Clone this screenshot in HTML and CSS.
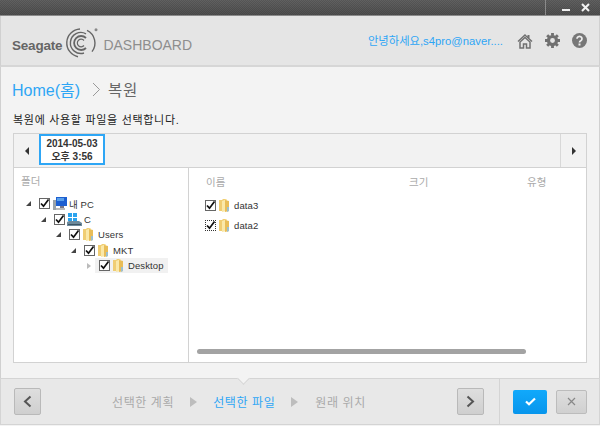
FILE: index.html
```html
<!DOCTYPE html>
<html>
<head>
    <title>Seagate Dashboard</title>
    <link rel="stylesheet" href="styles.css">
</head>
<body>
    <svg class="defs" width="0" height="0">
        <symbol id="folder" viewBox="0 0 12 15">
            <path d="M1 2h3l1-1h3v12H1z" fill="#f0cd72"/>
            <path d="M4 3l5-2v12l-5 1z" fill="#fae8a8"/>
            <path d="M7 2l4 1v10l-4 1z" fill="#e8bd58"/>
            <path d="M9 9l2 0v4l-2 1z" fill="#9cc0cf"/>
        </symbol>
        <symbol id="tick" viewBox="0 0 9 9">
            <path d="M1 4.500l2.500 2.700L8.500 0.500" fill="none" stroke="#111" stroke-width="1.700"/>
        </symbol>
    </svg>

    <div class="titlebar">
        <div class="win-btns">
            <svg class="win-min" width="8" height="2"><rect width="8" height="2" fill="#eee"/></svg>
            <svg class="win-close" width="9" height="9" viewBox="0 0 9 9"><path d="M1 1l7 7M8 1l-7 7" stroke="#f2f2f2" stroke-width="2"/></svg>
        </div>
    </div>

    <div class="header">
        <div class="brand">
            <span class="seagate">Seagate</span>
            <svg class="logo" width="34" height="30" viewBox="0 0 34 30" fill="none" stroke="#666" stroke-width="1.400">
                <path d="M15 1A14 14 0 0 0 13 28.700"/>
                <path d="M22 2.400A14 14 0 0 1 27 23.600"/>
                <path d="M21 5.800A10.500 10.500 0 1 0 19 25"/>
                <path d="M21 10A7 7 0 1 0 21 20" stroke-width="1.800"/>
                <path d="M19 12.500A3.800 3.800 0 1 0 19 17.500" stroke-width="1.200"/>
                <circle cx="31" cy="1.800" r="1.500" fill="#888" stroke="none"/>
            </svg>
            <span class="dashboard">DASHBOARD</span>
        </div>
        <div class="user">안녕하세요,s4pro@naver....</div>
        <div class="head-icons">
            <svg width="16" height="16" viewBox="0 0 16 16"><path d="M8 1L0.500 8l1 1L8 3l6.500 6 1-1-3-2.800V2h-2v1.400z" fill="#707070"/><path d="M3 9l5-4.500L13 9v6H9.500v-4h-3v4H3z" fill="none" stroke="#707070" stroke-width="1.500"/></svg>
            <svg class="gear" width="15" height="15" viewBox="0 0 16 16"><circle cx="8" cy="8" r="4.300" fill="none" stroke="#707070" stroke-width="3.400"/><path d="M8 0v3M8 13v3M0 8h3M13 8h3M2.300 2.300l2 2M11.700 11.700l2 2M13.700 2.300l-2 2M4.300 11.700l-2 2" stroke="#707070" stroke-width="3"/></svg>
            <svg width="15" height="15" viewBox="0 0 15 15"><circle cx="7.500" cy="7.500" r="7.500" fill="#777"/><path d="M5 5.700a2.500 2.300 0 1 1 3.800 2C7.900 8.200 7.500 8.600 7.500 9.500" fill="none" stroke="#eee" stroke-width="1.700"/><rect x="6.500" y="10.500" width="2" height="2" fill="#eee"/></svg>
        </div>
    </div>

    <div class="content">
        <div class="crumbs">
            <span class="crumb-home">Home(홈)</span>
            <svg class="crumb-sep" width="9" height="15" viewBox="0 0 9 15"><path d="M1 1l6.500 6.500L1 14" fill="none" stroke="#999" stroke-width="1"/></svg>
            <span class="crumb-now">복원</span>
        </div>
        <div class="hint">복원에 사용할 파일을 선택합니다.</div>

        <div class="panel">
            <div class="timeline">
                <div class="tl-arrow"><span class="tri-left"></span></div>
                <div class="tl-date">2014-05-03<br>오후 3:56</div>
                <div class="tl-space"></div>
                <div class="tl-arrow tl-next"><span class="tri-right"></span></div>
            </div>
            <div class="browser">
                <div class="tree">
                    <div class="col-head">폴더</div>
                    <div class="node lvl0">
                        <span class="tri-open"></span>
                        <span class="check"><svg width="9" height="9"><use href="#tick"/></svg></span>
                        <svg class="ico wide" width="15" height="15" viewBox="0 0 15 15"><rect x="4" y="1" width="11" height="9" fill="#1d5fd0"/><rect x="5" y="2" width="7" height="3" fill="#5aa0ea"/><rect x="8" y="10" width="4" height="2" fill="#778"/><rect x="1" y="4" width="3" height="10" fill="#9aa3aa"/><rect x="4" y="12" width="9" height="2" fill="#bbb"/></svg>
                        <span class="name">내 PC</span>
                    </div>
                    <div class="node lvl1">
                        <span class="tri-open"></span>
                        <span class="check"><svg width="9" height="9"><use href="#tick"/></svg></span>
                        <svg class="ico wide" width="15" height="15" viewBox="0 0 15 15"><path d="M1 1h4v4H1zM6 1h4v4H6zM1 6h4v3H1zM6 6h4v3H6z" fill="#2aa3ee"/><path d="M0 10l2-1h10l3 2v3H0z" fill="#6d8a9c"/><rect x="1" y="12" width="13" height="1" fill="#3d5566"/></svg>
                        <span class="name">C</span>
                    </div>
                    <div class="node lvl2">
                        <span class="tri-open"></span>
                        <span class="check"><svg width="9" height="9"><use href="#tick"/></svg></span>
                        <svg class="ico" width="12" height="15"><use href="#folder"/></svg>
                        <span class="name">Users</span>
                    </div>
                    <div class="node lvl3">
                        <span class="tri-open"></span>
                        <span class="check"><svg width="9" height="9"><use href="#tick"/></svg></span>
                        <svg class="ico" width="12" height="15"><use href="#folder"/></svg>
                        <span class="name">MKT</span>
                    </div>
                    <div class="node lvl4">
                        <span class="tri-closed"></span>
                        <div class="selected">
                            <span class="check"><svg width="9" height="9"><use href="#tick"/></svg></span>
                            <svg class="ico" width="12" height="15"><use href="#folder"/></svg>
                            <span class="name">Desktop</span>
                        </div>
                    </div>
                </div>
                <div class="files">
                    <div class="file-head">
                        <span class="fh-name">이름</span>
                        <span class="fh-size">크기</span>
                        <span class="fh-type">유형</span>
                    </div>
                    <div class="file">
                        <span class="check"><svg width="9" height="9"><use href="#tick"/></svg></span>
                        <svg class="ico" width="12" height="15"><use href="#folder"/></svg>
                        <span class="name">data3</span>
                    </div>
                    <div class="file">
                        <span class="check dotted"><svg width="9" height="9"><use href="#tick"/></svg></span>
                        <svg class="ico" width="12" height="15"><use href="#folder"/></svg>
                        <span class="name">data2</span>
                    </div>
                    <div class="scroll-wrap"><div class="scrollbar"></div></div>
                </div>
            </div>
        </div>
    </div>

    <div class="footer">
        <span class="notch"></span>
        <div class="wizard">
            <button class="nav-btn"><svg width="9" height="13" viewBox="0 0 9 13"><path d="M7.500 1.500L2 6.500l5.500 5" fill="none" stroke="#555" stroke-width="2"/></svg></button>
            <div class="steps">
                <span class="step">선택한 계획</span>
                <span class="step-tri"></span>
                <span class="step active">선택한 파일</span>
                <span class="step-tri"></span>
                <span class="step">원래 위치</span>
            </div>
            <button class="nav-btn"><svg width="9" height="13" viewBox="0 0 9 13"><path d="M1.500 1.500L7 6.500l-5.500 5" fill="none" stroke="#555" stroke-width="2"/></svg></button>
        </div>
        <div class="actions">
            <button class="ok"><svg width="11" height="9" viewBox="0 0 11 9"><path d="M1 4.500l3 2.800L10 1.500" fill="none" stroke="#fff" stroke-width="2.200"/></svg></button>
            <button class="cancel"><svg width="9" height="9" viewBox="0 0 9 9"><path d="M1 1l7 7M8 1l-7 7" stroke="#888" stroke-width="1.200"/></svg></button>
        </div>
    </div>
</body>
</html>
```

FILE: styles.css
```css
html, body {
    margin: 0;
    padding: 0;
}
body {
    width: 600px;
    height: 426px;
    overflow: hidden;
    display: flex;
    flex-direction: column;
    background: #f3f3f3;
    font-family: "Liberation Sans", "Noto Sans CJK KR", sans-serif;
    font-size: 11px;
    color: #222;
}
.defs {
    position: absolute;
}
.titlebar {
    height: 15px;
    flex: none;
    background:
        repeating-conic-gradient(rgba(0, 0, 0, 0.12) 0 25%, transparent 0 50%) 0 0 / 2px 2px,
        linear-gradient(#626262, #505050);
    border-bottom: 1px solid #8a8a8a;
    display: flex;
    justify-content: flex-end;
}
.win-btns {
    width: 55px;
    border-left: 1px solid #8a8a8a;
    box-sizing: border-box;
    display: flex;
    align-items: center;
    gap: 11px;
    padding-left: 16px;
}
.win-min {
    margin-top: 5px;
}
.header {
    height: 49px;
    flex: none;
    background: #e5e5e5;
    border-bottom: 2px solid #d6d6d6;
    border-left: 1px solid #d0d0d0;
    border-right: 1px solid #d0d0d0;
    display: flex;
    align-items: center;
}
.brand {
    display: flex;
    align-items: center;
    margin-left: 11px;
}
.seagate {
    font-weight: bold;
    font-size: 13.500px;
    color: #666;
    letter-spacing: -0.200px;
    margin-top: 10px;
}
.logo {
    margin-left: 3px;
    margin-top: 4px;
}
.dashboard {
    font-size: 14px;
    color: #8e8e8e;
    margin-left: 4px;
    margin-top: 8px;
}
.user {
    margin-left: auto;
    font-size: 11.300px;
    color: #2ea6f5;
    margin-top: -2px;
}
.head-icons {
    display: flex;
    align-items: center;
    gap: 12px;
    margin-left: 14px;
    margin-right: 12px;
}
.content {
    flex: 1;
    border-left: 1px solid #d0d0d0;
    border-right: 1px solid #d0d0d0;
    padding: 0 12px;
    min-height: 0;
}
.crumbs {
    display: flex;
    align-items: center;
    height: 20px;
    margin: 12px 0 0 -1px;
}
.crumb-home {
    font-size: 16px;
    color: #2ea6f5;
}
.crumb-sep {
    margin: 0 7px 0 12px;
}
.crumb-now {
    font-size: 15.500px;
    letter-spacing: 0.800px;
    color: #666;
}
.hint {
    margin-top: 14px;
    height: 14px;
    line-height: 14px;
    color: #222;
    letter-spacing: 0.700px;
}
.panel {
    margin-top: 6px;
    height: 230px;
    box-sizing: border-box;
    border: 1px solid #d2d2d2;
    background: #fff;
    display: flex;
    flex-direction: column;
}
.timeline {
    height: 33px;
    background: #f2f2f2;
    border-bottom: 1px solid #d2d2d2;
    display: flex;
    flex: none;
}
.tl-arrow {
    width: 25px;
    display: flex;
    align-items: center;
    justify-content: center;
}
.tl-next {
    border-left: 1px solid #d8d8d8;
}
.tri-left {
    border: 4px solid transparent;
    border-right: 4px solid #333;
    border-left: 0;
}
.tri-right {
    border: 4px solid transparent;
    border-left: 4px solid #333;
    border-right: 0;
}
.tl-date {
    width: 66px;
    height: 31px;
    border: 2px solid #2ea6f5;
    box-sizing: border-box;
    background: #fff;
    text-align: center;
    font-size: 10px;
    font-weight: bold;
    line-height: 12.500px;
    padding-top: 2px;
    color: #333;
}
.tl-space {
    flex: 1;
}
.browser {
    flex: 1;
    display: flex;
    min-height: 0;
}
.tree {
    width: 174px;
    border-right: 1px solid #d2d2d2;
    flex: none;
}
.col-head {
    color: #aaa;
    font-size: 10.500px;
    padding: 6px 0 0 7px;
    height: 14px;
    line-height: 14px;
    margin-bottom: 8px;
}
.node {
    display: flex;
    align-items: center;
    height: 15.500px;
    font-size: 9.500px;
    letter-spacing: 0.100px;
}
.lvl0 { padding-left: 12px; }
.lvl1 { padding-left: 27px; }
.lvl2 { padding-left: 42px; }
.lvl3 { padding-left: 57px; }
.lvl4 { padding-left: 73px; }
.tri-open {
    width: 0;
    height: 0;
    border-left: 5px solid transparent;
    border-bottom: 5px solid #444;
    margin-right: 8px;
}
.tri-closed {
    width: 0;
    height: 0;
    border: 3.500px solid transparent;
    border-left: 4px solid #bbb;
    border-right: 0;
    margin-right: 8px;
}
.selected {
    display: flex;
    align-items: center;
    background: #f1f1f1;
    height: 15px;
    padding: 0 4px 0 4px;
    margin-left: -4px;
}
.check {
    width: 9px;
    height: 9px;
    border: 1px solid #666;
    background: #fff;
    display: flex;
    flex: none;
}
.check.dotted {
    border-style: dotted;
    border-color: #333;
}
.ico {
    margin-left: 2px;
    flex: none;
}
.name {
    margin-left: 4px;
    color: #333;
}
.wide + .name {
    margin-left: 2px;
}
.files {
    flex: 1;
    display: flex;
    flex-direction: column;
    min-width: 0;
}
.file-head {
    display: flex;
    color: #aaa;
    font-size: 10.500px;
    height: 14px;
    line-height: 14px;
    padding-top: 7px;
    margin-bottom: 6px;
}
.fh-name {
    margin-left: 17px;
    width: 203px;
}
.fh-size {
    width: 118px;
}
.file {
    display: flex;
    align-items: center;
    height: 20px;
    padding-left: 16px;
    font-size: 9.500px;
    letter-spacing: 0.100px;
}
.scroll-wrap {
    margin-top: auto;
    padding: 0 0 8px 8px;
}
.scrollbar {
    width: 329px;
    height: 5px;
    border-radius: 3px;
    background: #a3a3a3;
}
.footer {
    position: relative;
    height: 47px;
    margin-bottom: 1px;
    flex: none;
    background: #e8e8e8;
    border: 1px solid #d4d4d4;
    box-sizing: border-box;
    display: flex;
    align-items: center;
}
.notch {
    position: absolute;
    left: 238px;
    top: -5px;
    width: 8px;
    height: 8px;
    background: #f3f3f3;
    border-right: 1px solid #d4d4d4;
    border-bottom: 1px solid #d4d4d4;
    transform: rotate(45deg);
}
.wizard {
    flex: 1;
    height: 100%;
    display: flex;
    align-items: center;
    padding: 0 15px 0 13px;
    border-right: 1px solid #d4d4d4;
}
.nav-btn {
    width: 27px;
    height: 27px;
    padding: 0;
    border: 1px solid #b9b9b9;
    border-radius: 2px;
    background: linear-gradient(#dedede, #cfcfcf);
    display: flex;
    align-items: center;
    justify-content: center;
}
.steps {
    flex: 1;
    display: flex;
    align-items: center;
    padding-left: 71px;
    font-size: 12px;
    letter-spacing: 0.600px;
    color: #aaa;
}
.step.active {
    color: #2ea6f5;
}
.step-tri {
    border: 5px solid transparent;
    border-left: 7px solid #bdbdbd;
    border-right: 0;
    margin: 0 16px;
}
.step.active + .step-tri {
    margin-right: 17px;
}
.actions {
    width: 99px;
    flex: none;
    display: flex;
    align-items: center;
    gap: 9px;
    padding-left: 13px;
    box-sizing: border-box;
}
.ok {
    width: 34px;
    height: 24px;
    padding: 0;
    border: 0;
    border-radius: 2px;
    background: linear-gradient(#11a9fb, #0795ec);
}
.cancel {
    width: 31px;
    height: 24px;
    padding: 0;
    border: 1px solid #bcbcbc;
    border-radius: 2px;
    background: linear-gradient(#dedede, #d0d0d0);
}
```
